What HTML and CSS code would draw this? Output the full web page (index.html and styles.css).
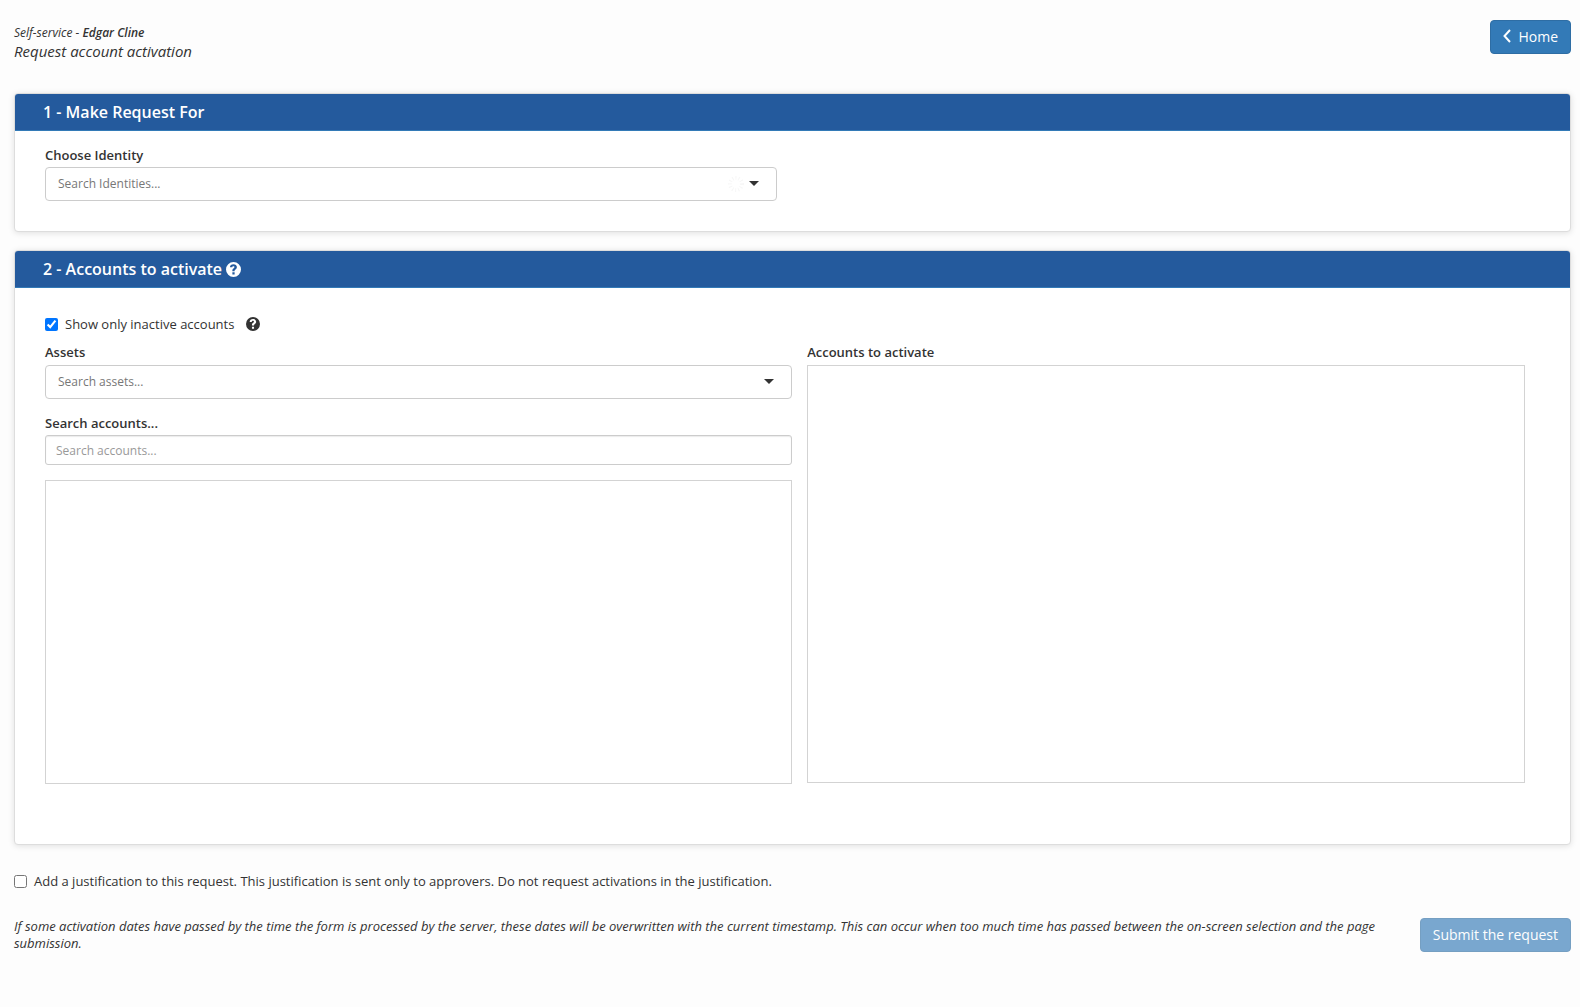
FILE: index.html
```html
<!DOCTYPE html>
<html lang="en">
<head>
  <meta charset="UTF-8">
  <meta name="viewport" content="width=device-width, initial-scale=1.0">
  <title>Request account activation</title>
  <link rel="stylesheet" href="styles.css">
</head>
<body>

<!-- Page header -->
<header class="page-header">
  <div class="page-title">
    <div class="page-user">Self-service - <strong>Edgar Cline</strong></div>
    <h1>Request account activation</h1>
  </div>
  <button type="button" class="btn">
    <svg class="icon-chevron" viewBox="0 0 8 14" aria-hidden="true"><path d="M7 1L1.500 7L7 13"/></svg>
    Home
  </button>
</header>

<form class="request-form">
  <!-- Identity -->
  <section class="panel">
    <h2 class="panel-heading">1 - Make Request For</h2>
    <div class="panel-body identity-body">
      <label class="field-label" for="identity">Choose Identity</label>
      <div class="combobox combobox-identity">
        <input type="search" id="identity" placeholder="Search Identities...">
        <svg class="spinner" viewBox="0 0 16 16" aria-hidden="true"><circle cx="8" cy="8" r="6"/></svg>
        <button type="button" class="caret-btn" aria-label="Show identities"><span class="caret"></span></button>
      </div>
    </div>
  </section>

  <!-- Accounts -->
  <section class="panel">
    <h2 class="panel-heading">2 - Accounts to activate
      <svg class="icon-help" viewBox="0 0 16 16" aria-hidden="true"><path fill-rule="evenodd" d="M8 0a8 8 0 1 1 0 16A8 8 0 0 1 8 0zM6.800 11v2.300h2.400V11zM4.200 5.600h2.400c0-.8.5-1.200 1.300-1.200.7 0 1.200.4 1.200 1 0 .5-.3.8-.9 1.200-.9.6-1.400 1.200-1.400 2.400v.8h2.400v-.5c0-.7.4-.9 1-1.300.8-.6 1.400-1.300 1.400-2.600 0-2-1.600-3.100-3.600-3.100-2.300 0-3.800 1.200-3.800 3.300z"/></svg>
    </h2>
    <div class="panel-body accounts-body">
      <div class="check-row">
        <input type="checkbox" id="inactive-only" checked>
        <label for="inactive-only">Show only inactive accounts</label>
        <svg class="icon-help icon-help-dark" viewBox="0 0 16 16" aria-hidden="true"><path fill-rule="evenodd" d="M8 0a8 8 0 1 1 0 16A8 8 0 0 1 8 0zM6.800 11v2.300h2.400V11zM4.200 5.600h2.400c0-.8.5-1.200 1.300-1.200.7 0 1.200.4 1.200 1 0 .5-.3.8-.9 1.200-.9.6-1.400 1.200-1.400 2.400v.8h2.400v-.5c0-.7.4-.9 1-1.300.8-.6 1.400-1.300 1.400-2.600 0-2-1.600-3.100-3.600-3.100-2.300 0-3.800 1.200-3.800 3.300z"/></svg>
      </div>
      <div class="account-columns">
        <div class="column">
          <label class="field-label" for="assets">Assets</label>
          <div class="combobox">
            <input type="search" id="assets" placeholder="Search assets...">
            <button type="button" class="caret-btn" aria-label="Show assets"><span class="caret"></span></button>
          </div>
          <label class="field-label accounts-label" for="accounts">Search accounts...</label>
          <input type="text" id="accounts" class="text-input" placeholder="Search accounts...">
          <div class="list-box found-accounts"></div>
        </div>
        <div class="column">
          <h3 class="field-label">Accounts to activate</h3>
          <div class="list-box selected-accounts"></div>
        </div>
      </div>
    </div>
  </section>

  <!-- Justification and submit -->
  <div class="check-row justification">
    <input type="checkbox" id="justify">
    <label for="justify">Add a justification to this request. This justification is sent only to approvers. Do not request activations in the justification.</label>
  </div>
  <div class="form-footer">
    <p class="note">If some activation dates have passed by the time the form is processed by the server, these dates will be overwritten with the current timestamp. This can occur when too much time has passed between the on-screen selection and the page submission.</p>
    <button type="submit" class="btn" disabled>Submit the request</button>
  </div>
</form>

</body>
</html>
```
FILE: styles.css
```css
* {
  box-sizing: border-box;
}

body {
  margin: 0;
  padding: 20px 9px 20px 14px;
  background: #fdfdfd;
  color: #333;
  font-family: "Open Sans", sans-serif;
  font-size: 13px;
  line-height: 18px;
}

input,
button {
  font-family: inherit;
}

.page-header {
  display: flex;
  justify-content: space-between;
  align-items: flex-start;
  margin-bottom: 33px;
}

.page-title {
  padding-top: 4px;
  font-style: italic;
}

.page-user {
  font-size: 12px;
}

.page-user strong {
  font-weight: 600;
}

.page-title h1 {
  margin: 0;
  font-size: 15px;
  font-weight: 400;
}

.btn {
  display: flex;
  align-items: center;
  gap: 7px;
  height: 34px;
  padding: 0 12px 2px;
  border: 1px solid #2e6da4;
  border-radius: 4px;
  background: #337ab7;
  color: #fff;
  font-size: 14px;
  white-space: nowrap;
  cursor: pointer;
}

.btn:disabled {
  opacity: 0.65;
  cursor: not-allowed;
}

.icon-chevron {
  width: 8px;
  height: 14px;
  fill: none;
  stroke: #fff;
  stroke-width: 2;
}

.panel {
  margin-bottom: 18px;
  border: 1px solid #ddd;
  border-radius: 4px;
  background: #fff;
  box-shadow: 0 1px 6px rgba(0, 0, 0, 0.12);
}

.panel-heading {
  display: flex;
  align-items: center;
  gap: 4px;
  height: 37px;
  margin: 0;
  padding: 0 28px;
  border-bottom: 1px solid #337ab7;
  border-radius: 3px 3px 0 0;
  background: #245a9d;
  color: #fff;
  font-size: 16px;
  font-weight: 600;
}

.icon-help {
  width: 15px;
  height: 15px;
  fill: currentColor;
}

.icon-help-dark {
  width: 14px;
  height: 14px;
  margin-left: 5px;
}

.panel-body {
  padding: 0 45px 0 30px;
}

.identity-body {
  padding-top: 15px;
  padding-bottom: 30px;
}

.accounts-body {
  padding-top: 27px;
  padding-bottom: 60px;
}

.field-label {
  display: block;
  margin: 0 0 3px;
  font-size: 13px;
  font-weight: 600;
}

.combobox {
  display: flex;
  align-items: center;
  height: 34px;
  border: 1px solid #ccc;
  border-radius: 4px;
  background: #fff;
}

.combobox-identity {
  width: calc(50% - 8px);
}

.combobox input {
  flex: 1;
  min-width: 0;
  height: 100%;
  padding: 0 12px 1px;
  border: 0;
  outline: 0;
  background: none;
  font-size: 12px;
}

.combobox input::placeholder {
  color: #777;
}

.spinner {
  width: 16px;
  height: 16px;
  margin-right: -12px;
  fill: none;
  stroke: #f7f7f7;
  stroke-width: 4;
  stroke-dasharray: 1 2;
}

.caret-btn {
  width: 44px;
  height: 100%;
  padding: 0 0 3px;
  border: 0;
  background: none;
  cursor: pointer;
}

.caret {
  display: inline-block;
  border-top: 5px solid #333;
  border-right: 5px solid transparent;
  border-left: 5px solid transparent;
  vertical-align: middle;
}

.check-row {
  display: flex;
  align-items: center;
  gap: 7px;
}

.check-row input {
  width: 13px;
  height: 13px;
  margin: 1px 0 0;
}

.account-columns {
  display: grid;
  grid-template-columns: 51fr 49fr;
  gap: 15px;
  margin-top: 10px;
}

.account-columns .field-label {
  margin-bottom: 4px;
}

.account-columns .accounts-label {
  margin-top: 15px;
  margin-bottom: 3px;
}

.text-input {
  display: block;
  width: 100%;
  height: 30px;
  padding: 0 10px;
  border: 1px solid #ccc;
  border-radius: 3px;
  box-shadow: inset 0 1px 1px rgba(0, 0, 0, 0.08);
  font-size: 12px;
}

.text-input::placeholder {
  color: #999;
}

.list-box {
  border: 1px solid #d3d3d3;
  overflow: auto;
}

.found-accounts {
  height: 304px;
  margin-top: 15px;
}

.selected-accounts {
  height: 418px;
}

.justification {
  margin-top: 27px;
}

.form-footer {
  display: flex;
  justify-content: space-between;
  align-items: flex-start;
  gap: 36px;
  margin-top: 28px;
}

.note {
  margin: 0;
  font-size: 13px;
  font-style: italic;
  line-height: 17px;
}
```
